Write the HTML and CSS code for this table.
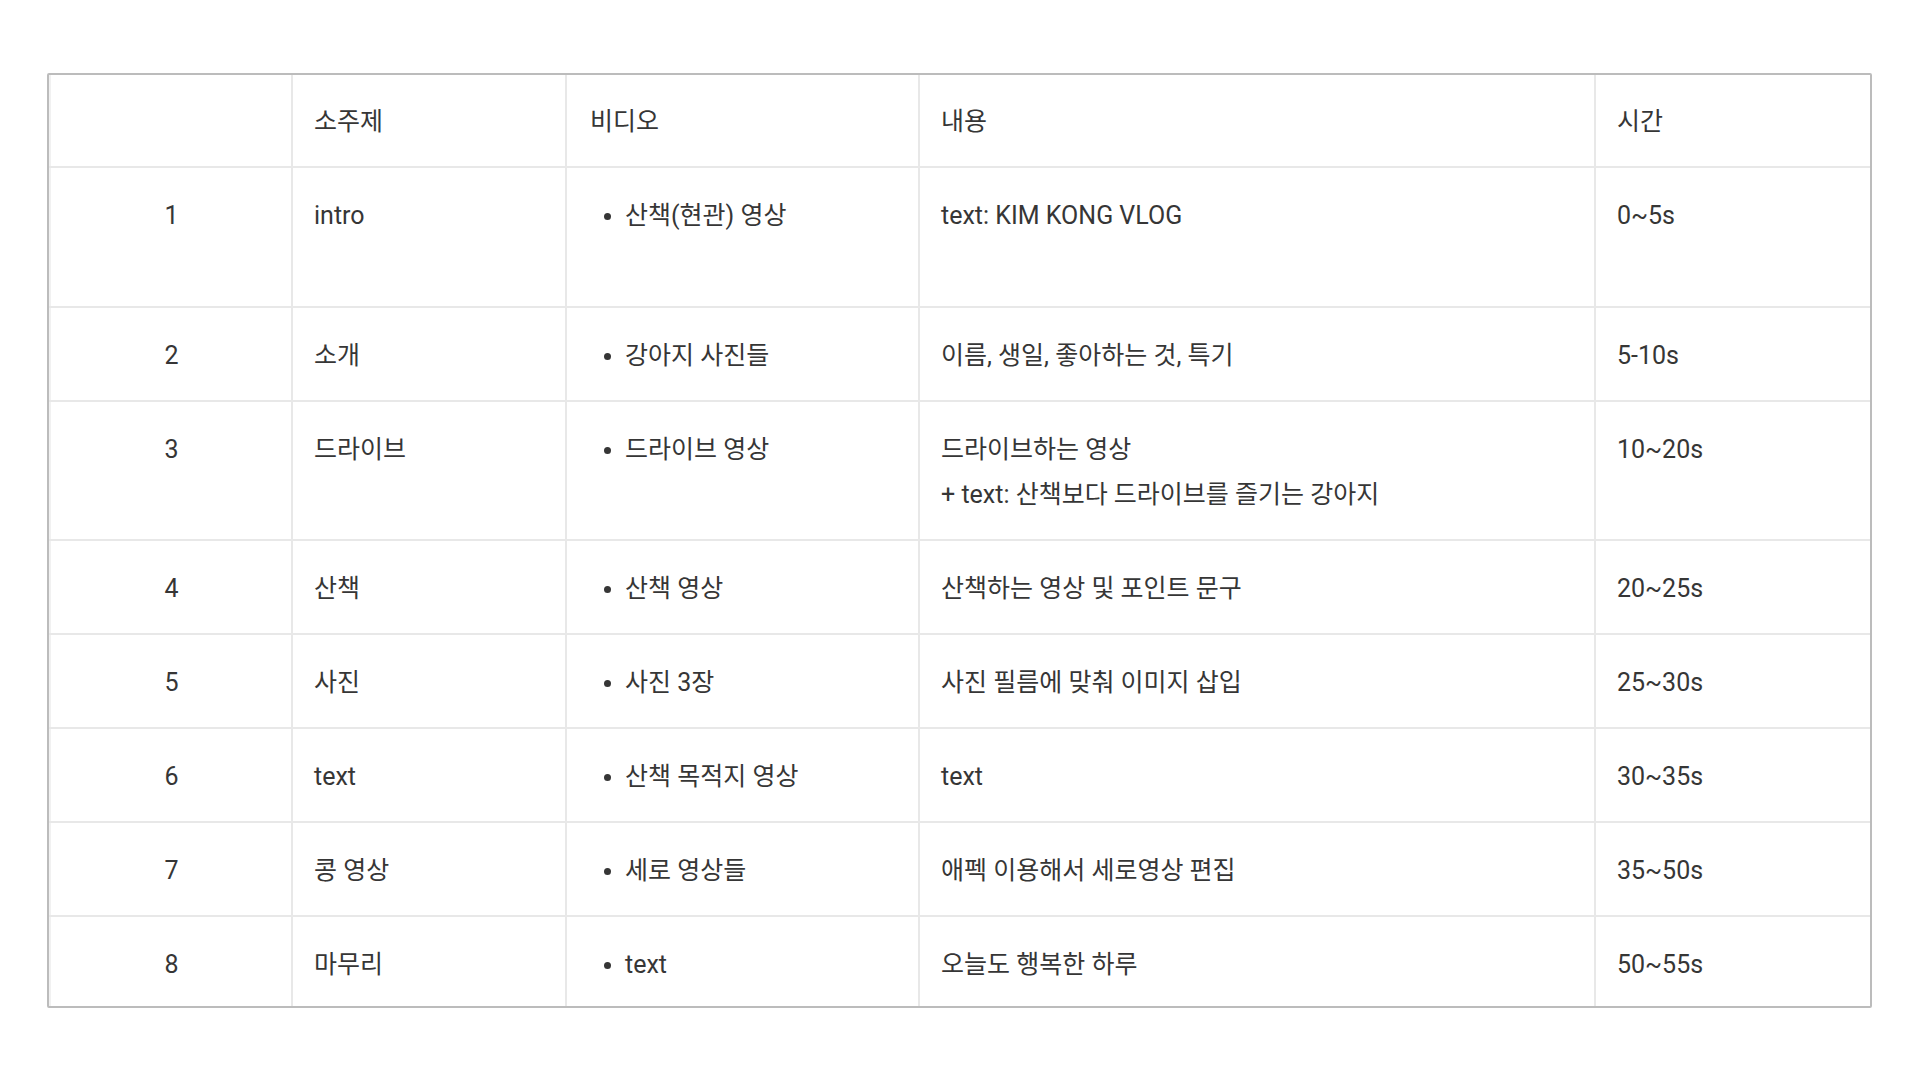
FILE: index.html
```html
<!DOCTYPE html>
<html lang="ko">
<head>
<meta charset="utf-8">
<link rel="stylesheet" href="styles.css">
</head>
<body>
<div class="page">
<table class="plan">
  <colgroup>
    <col class="c-num"><col class="c-topic"><col class="c-video"><col class="c-content"><col class="c-time">
  </colgroup>
  <thead>
    <tr><th></th><th>소주제</th><th>비디오</th><th>내용</th><th>시간</th></tr>
  </thead>
  <tbody>
    <tr class="tall"><td class="num">1</td><td>intro</td><td><ul><li>산책(현관) 영상</li></ul></td><td>text: KIM KONG VLOG</td><td>0~5s</td></tr>
    <tr><td class="num">2</td><td>소개</td><td><ul><li>강아지 사진들</li></ul></td><td>이름, 생일, 좋아하는 것, 특기</td><td>5-10s</td></tr>
    <tr><td class="num">3</td><td>드라이브</td><td><ul><li>드라이브 영상</li></ul></td><td>드라이브하는 영상<br>+ text: 산책보다 드라이브를 즐기는 강아지</td><td>10~20s</td></tr>
    <tr><td class="num">4</td><td>산책</td><td><ul><li>산책 영상</li></ul></td><td>산책하는 영상 및 포인트 문구</td><td>20~25s</td></tr>
    <tr><td class="num">5</td><td>사진</td><td><ul><li>사진 3장</li></ul></td><td>사진 필름에 맞춰 이미지 삽입</td><td>25~30s</td></tr>
    <tr><td class="num">6</td><td>text</td><td><ul><li>산책 목적지 영상</li></ul></td><td>text</td><td>30~35s</td></tr>
    <tr><td class="num">7</td><td>콩 영상</td><td><ul><li>세로 영상들</li></ul></td><td>애펙 이용해서 세로영상 편집</td><td>35~50s</td></tr>
    <tr><td class="num">8</td><td>마무리</td><td><ul><li>text</li></ul></td><td>오늘도 행복한 하루</td><td>50~55s</td></tr>
  </tbody>
</table>
</div>
</body>
</html>
```
FILE: styles.css
```css
html, body {
  margin: 0;
  padding: 0;
  background: #ffffff;
}
.page {
  padding: 73px 48px 0 47px;
}
.plan {
  width: 1825px;
  table-layout: fixed;
  border-collapse: separate;
  border-spacing: 0;
  border: 2px solid #bcbcbc;
  border-radius: 2px;
  box-shadow: inset 2px 0 0 #f1f1f1;
  font-family: Roboto, "Noto Sans CJK KR", sans-serif;
  font-size: 25px;
  line-height: 45px;
  color: #363636;
}
.c-num { width: 244px; }
.c-topic { width: 274px; }
.c-video { width: 353px; }
.c-content { width: 676px; }
.c-time { width: auto; }

.plan th, .plan td {
  font-weight: 400;
  text-align: left;
  vertical-align: top;
  padding: 25px 21px 22px 21px;
  border-right: 2px solid #e8e8e8;
  border-bottom: 2px solid #e8e8e8;
}
.plan th {
  padding-top: 24px;
  padding-bottom: 22px;
}
.plan th:last-child, .plan td:last-child { border-right: none; }
.plan tbody tr:last-child td { border-bottom: none; padding-bottom: 19px; }
.plan th:nth-child(3) { padding-left: 23px; }
.plan td.num { text-align: center; padding-left: 3px; padding-right: 0; }
.plan tr.tall td { height: 91px; }

.plan ul {
  list-style: none;
  margin: 0;
  padding: 0 0 0 37px;
}
.plan li {
  position: relative;
}
.plan li::before {
  content: "";
  position: absolute;
  left: -21px;
  top: 20px;
  width: 7px;
  height: 7px;
  border-radius: 50%;
  background: #363636;
}
```
